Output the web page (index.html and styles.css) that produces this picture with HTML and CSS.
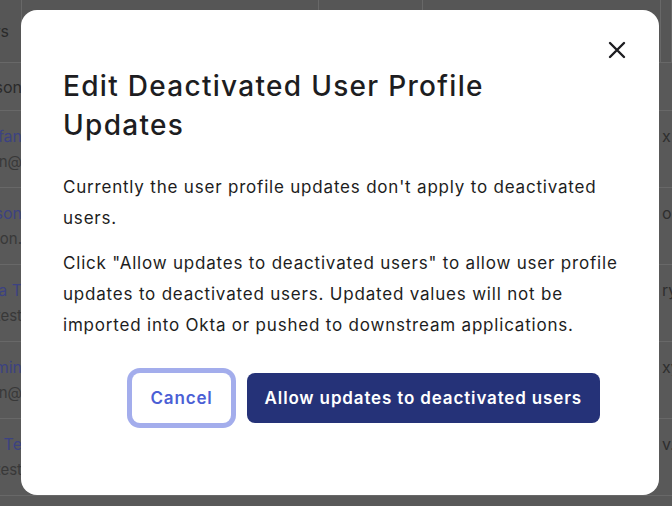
FILE: index.html
```html
<!DOCTYPE html>
<html>
<head>
	<title>Edit Deactivated User Profile Updates</title>
	<meta charset="utf-8">
	<meta name="viewport" content="width=device-width, initial-scale=1">
	<link rel="stylesheet" href="styles.css">
</head>
<body>
	<div class="page">
		<div class="row head">
			<div class="cell cut"><span>Users</span></div>
			<div class="cell"></div>
			<div class="cell"></div>
			<div class="cell"></div>
			<div class="cell"></div>
		</div>
		<div class="row sub">
			<div class="cell cut"><span>Person</span></div>
		</div>
		<div class="row user">
			<div class="cell cut"><span class="name">Stefan</span><span class="mail">stefan@</span></div>
			<div class="cell"></div><div class="cell"></div><div class="cell"></div>
			<div class="cell"><span class="other">x</span></div>
		</div>
		<div class="row user">
			<div class="cell cut"><span class="name">Jason</span><span class="mail">jason.</span></div>
			<div class="cell"></div><div class="cell"></div><div class="cell"></div>
			<div class="cell"><span class="other">or</span></div>
		</div>
		<div class="row user">
			<div class="cell cut"><span class="name">Anna T</span><span class="mail">annatest</span></div>
			<div class="cell"></div><div class="cell"></div><div class="cell"></div>
			<div class="cell"><span class="other">ry</span></div>
		</div>
		<div class="row user">
			<div class="cell cut"><span class="name">Admin</span><span class="mail">admin@</span></div>
			<div class="cell"></div><div class="cell"></div><div class="cell"></div>
			<div class="cell"><span class="other">xy</span></div>
		</div>
		<div class="row user">
			<div class="cell cut"><span class="name">Te</span><span class="mail">test</span></div>
			<div class="cell"></div><div class="cell"></div><div class="cell"></div>
			<div class="cell"><span class="other">v.x</span></div>
		</div>
	</div>

	<div class="modal">
		<button class="close" aria-label="Close">
			<svg width="24" height="24" viewBox="0 0 24 24"><path d="M5 5 L19 19 M19 5 L5 19" stroke="#1d1d21" stroke-width="2.4" stroke-linecap="round" fill="none"/></svg>
		</button>
		<h2 class="title">Edit Deactivated User Profile Updates</h2>
		<p class="text">Currently the user profile updates don't apply to deactivated users.</p>
		<p class="text">Click "Allow updates to deactivated users" to allow user profile updates to deactivated users. Updated values will not be imported into Okta or pushed to downstream applications.</p>
		<div class="actions">
			<button class="btn cancel">Cancel</button>
			<button class="btn primary">Allow updates to deactivated users</button>
		</div>
	</div>
</body>
</html>
```
FILE: styles.css
```css
body {
	margin: 0;
	background: #595959;
	font-family: Inter, "Noto Sans", sans-serif;
	overflow: hidden;
}
.page {
	width: 672px;
	height: 506px;
}
.row {
	display: grid;
	grid-template-columns: 22px 297px 104px 238px 1fr;
	border-bottom: 1px solid #686868;
}
.head {
	height: 62px;
	background: #565656;
}
.head .cell {
	border-right: 1px solid #686868;
}
.sub {
	height: 47px;
}
.user {
	height: 76px;
}
.cell {
	overflow: hidden;
	white-space: nowrap;
	font-size: 16px;
	color: #2a2a2a;
}
.cut {
	display: flex;
	flex-direction: column;
	align-items: flex-end;
}
.head .cut {
	justify-content: center;
	padding-right: 12px;
}
.sub .cut {
	justify-content: center;
}
.user .cut, .user .cell {
	padding-top: 12px;
}
.name {
	line-height: 26px;
	color: #3c4282;
}
.mail {
	line-height: 26px;
	font-size: 15px;
	color: #383838;
}
.other {
	display: block;
	line-height: 26px;
	padding-left: 1px;
	color: #2e2e2e;
}

.modal {
	position: fixed;
	left: 21px;
	top: 10px;
	width: 638px;
	height: 485px;
	box-sizing: border-box;
	padding: 57px 34px 0 42px;
	background: #fff;
	border-radius: 16px;
	color: #1d1d21;
}
.close {
	position: absolute;
	left: 584px;
	top: 28px;
	width: 24px;
	height: 24px;
	padding: 0;
	border: none;
	background: none;
}
.close svg {
	display: block;
}
.title {
	margin: 0 0 27px;
	font-size: 28px;
	line-height: 39px;
	font-weight: 500;
	letter-spacing: 1.3px;
	padding-right: 68px;
}
.text {
	margin: 0 0 14px;
	font-size: 17px;
	line-height: 31px;
	letter-spacing: 0.8px;
}
.actions {
	display: flex;
	justify-content: flex-end;
	gap: 16px;
	margin-top: 32px;
	padding-right: 25px;
}
.btn {
	height: 50px;
	padding: 0 18px;
	border: none;
	border-radius: 8px;
	font-family: Inter, "Noto Sans", sans-serif;
	font-size: 17px;
	font-weight: 600;
	letter-spacing: 0.85px;
}
.cancel {
	background: #fff;
	color: #4b5fd5;
	box-shadow: 0 0 0 5px #a3adec;
}
.primary {
	background: #253278;
	color: #fff;
}
```
